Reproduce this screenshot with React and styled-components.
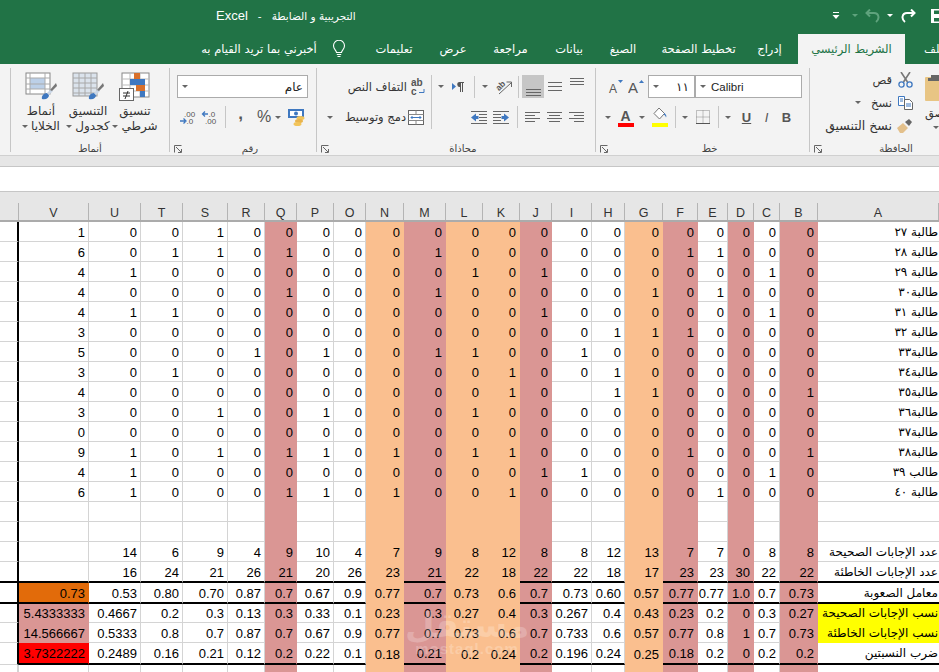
import React from "react";
import styled, { createGlobalStyle } from "styled-components";

const arabic = `"DejaVu Sans", sans-serif`;
const latin = `"Liberation Sans", "DejaVu Sans", sans-serif`;

const GlobalStyle = createGlobalStyle`
  html, body {
    margin: 0;
    padding: 0;
    background: #fff;
    overflow: hidden;
  }
`;

const Page = styled.div`
  width: 939px;
  height: 672px;
  overflow: hidden;
  display: flex;
  flex-direction: column;
  font-family: ${arabic};
`;

/* title bar + tabs */
const Header = styled.div`
  background: #217346;
  color: #fff;
  height: 64px;
  flex: none;
`;

const TitleRow = styled.div`
  height: 34px;
  display: flex;
  align-items: center;
  padding-left: 216px;
`;

const Title = styled.div`
  font-size: 10.5px;
  white-space: pre;
  margin-top: -4px;
  span { font-family: ${latin}; font-size: 13px; }
`;

const QuickBar = styled.div`
  margin-left: auto;
  margin-right: -21px;
  margin-top: -3px;
  height: 20px;
  display: flex;
  align-items: center;
`;

const TabRow = styled.div`
  height: 30px;
  display: flex;
  padding-left: 196px;
  overflow: hidden;
`;

const Tab = styled.div`
  flex: 0 0 ${(p) => p.$w}px;
  display: flex;
  align-items: center;
  justify-content: center;
  font-size: 11.5px;
  white-space: nowrap;
  background: ${(p) => (p.$active ? "#f3f3f3" : "transparent")};
  color: ${(p) => (p.$active ? "#217346" : "#fff")};
`;

/* ribbon */
const Ribbon = styled.div`
  height: 91px;
  flex: none;
  box-sizing: border-box;
  padding: 4px 0 3px 10px;
  background: #f3f3f3;
  display: flex;
  overflow: hidden;
  color: #333;
`;

const Group = styled.div`
  flex: 0 0 ${(p) => p.$w}px;
  box-sizing: border-box;
  border-left: 1px solid #c6c6c6;
  display: flex;
  flex-direction: column;
  padding-top: ${(p) => p.$top ?? 7}px;
`;

const GroupBody = styled.div`
  flex: 1;
  display: flex;
  padding-left: ${(p) => p.$pad ?? 0}px;
  min-height: 0;
`;

const Stack = styled.div`
  display: flex;
  flex-direction: column;
  gap: ${(p) => p.$gap ?? 7}px;
  flex: 0 0 ${(p) => (p.$w ? `${p.$w}px` : "auto")};
`;

const ToolRow = styled.div`
  display: flex;
  align-items: center;
  height: ${(p) => p.$h ?? 23}px;
  padding-left: ${(p) => p.$pad ?? 0}px;
`;

const Slot = styled.div`
  flex: 0 0 ${(p) => p.$w}px;
  height: 100%;
  display: flex;
  align-items: center;
  justify-content: ${(p) => (p.$end ? "flex-end" : "center")};
  background: ${(p) => (p.$on ? "#c6c6c6" : "transparent")};
  font-size: 11.5px;
  white-space: nowrap;
  color: #333;
`;

const Sep = styled.span`
  flex: none;
  width: 1px;
  height: ${(p) => p.$h ?? 22}px;
  background: #c6c6c6;
`;

const Caret = styled.i`
  display: inline-block;
  width: 0;
  height: 0;
  border-left: 3px solid transparent;
  border-right: 3px solid transparent;
  border-top: 3px solid ${(p) => p.$color ?? "#666"};
`;

const SelectBox = styled.div`
  box-sizing: border-box;
  flex: 0 0 ${(p) => p.$w}px;
  height: 23px;
  background: #fff;
  border: 1px solid #ababab;
  display: flex;
  align-items: center;
  gap: 5px;
  padding: 0 ${(p) => p.$right ?? 4}px 0 4px;
  color: #222;
`;

const BoxText = styled.span`
  font-family: ${(p) => (p.$latin ? latin : arabic)};
  font-size: ${(p) => (p.$latin ? "11.5px" : "12px")};
  margin-left: ${(p) => (p.$latin ? "0" : "auto")};
`;

const GroupLabel = styled.div`
  height: 14px;
  margin-bottom: -3px;
  display: flex;
  align-items: center;
  flex: none;
  font-size: 10px;
  color: #444;
  span.t {
    flex: 1;
    text-align: center;
    white-space: nowrap;
  }
`;

const Launcher = styled.svg`
  flex: none;
  width: 8px;
  height: 8px;
  margin: 2px 2px 0 4px;
`;

const BigButton = styled.div`
  flex: 0 0 ${(p) => p.$w}px;
  display: flex;
  flex-direction: column;
  align-items: center;
`;

const BigLabel = styled.div`
  margin-top: 3px;
  font-size: 12px;
  line-height: 14.5px;
  text-align: center;
  white-space: nowrap;
  color: #333;
  i { margin-right: 3px; vertical-align: middle; }
`;

const SmallTool = styled.div`
  height: 23px;
  display: flex;
  align-items: center;
  justify-content: flex-end;
  font-size: ${(p) => p.$size ?? 11.5}px;
  white-space: nowrap;
  i { margin-right: 10px; }
  div { margin-left: 2px; }
`;

const PasteCol = styled.div`
  flex: none;
  display: flex;
  flex-direction: column;
  align-items: flex-start;
  padding: 7px 0 0 9px;
  font-size: 11.5px;
  color: #333;
  span { margin-top: 5px; line-height: 14px; white-space: nowrap; }
  i { margin: 6px 0 0 8px; }
`;

const Percent = styled.span`
  font-family: ${latin};
  font-size: 16px;
  color: #555;
`;

const Comma = styled.span`
  font-family: ${latin};
  font-size: 17px;
  font-weight: 700;
  color: #555;
  margin-top: -7px;
`;

const FontGlyph = styled.span`
  font-family: ${latin};
  font-size: 13px;
  font-weight: ${(p) => (p.$bold ? 700 : 400)};
  font-style: ${(p) => (p.$italic ? "italic" : "normal")};
  text-decoration: ${(p) => (p.$under ? "underline" : "none")};
  color: #555;
`;

/* bands between ribbon and sheet */
const Band = styled.div`
  height: 12px;
  flex: none;
  box-sizing: border-box;
  background: #e6e6e6;
  border-top: 1px solid #d0d0d0;
  border-bottom: 1px solid #c6c6c6;
`;

const FormulaBar = styled.div`
  height: 24px;
  flex: none;
  background: #fff;
`;

/* sheet */
const Sheet = styled.div`
  position: relative;
  flex: 1;
  overflow: hidden;
  font-family: ${latin};
  font-size: 13px;
  color: #000;
`;

const HeaderRow = styled.div`
  display: grid;
  grid-template-columns: ${(p) => p.$cols};
  height: 31px;
  box-sizing: border-box;
  padding-top: 11px;
  background: #e6e6e6;
  border-top: 1px solid #c6c6c6;
  border-bottom: 2px solid #ababab;
`;

const ColName = styled.div`
  display: flex;
  align-items: center;
  justify-content: center;
  padding-top: 2px;
  font-size: 12.5px;
  color: #333;
  border-right: 1px solid #b4b4b4;
`;

const Row = styled.div`
  display: grid;
  grid-template-columns: ${(p) => p.$cols};
  height: ${(p) => p.$h}px;
`;

const Cell = styled.div`
  box-sizing: border-box;
  display: flex;
  align-items: center;
  justify-content: flex-end;
  padding: 1px 3px 0 0;
  white-space: nowrap;
  background: ${(p) => p.$fill ?? "#fff"};
  border-right: 1px solid ${(p) => (p.$fill ? "transparent" : "#d4d4d4")};
  border-bottom: ${(p) =>
    p.$thick ? "2px solid #000" : `1px solid ${p.$fill ? "transparent" : "#d4d4d4"}`};
`;

const Gutter = styled(Cell)`
  padding: 0;
  border-right: 2px solid ${(p) => (p.$open ? "#d4d4d4" : "#000")};
`;

const NameCell = styled(Cell)`
  direction: rtl;
  justify-content: flex-start;
  padding: 0 1px 0 0;
  font-family: ${arabic};
  font-size: 12px;
  overflow: hidden;
  border-right: none;
`;

const Watermark = styled.div`
  position: absolute;
  left: 405px;
  bottom: 16px;
  width: 124px;
  text-align: center;
  color: rgba(255, 255, 255, 0.22);
  pointer-events: none;
  b {
    display: block;
    font-family: ${arabic};
    font-size: 34px;
    line-height: 34px;
  }
  span {
    display: block;
    font-family: ${latin};
    font-size: 15px;
    font-weight: 700;
    line-height: 14px;
    letter-spacing: 1px;
  }
`;

const PINK = "#da9694";
const ORANGE = "#fabf8f";

const cols = [
  { n: "V", w: 70 },
  { n: "U", w: 52 },
  { n: "T", w: 42 },
  { n: "S", w: 45 },
  { n: "R", w: 37 },
  { n: "Q", w: 32, fill: PINK },
  { n: "P", w: 37 },
  { n: "O", w: 32 },
  { n: "N", w: 38, fill: ORANGE },
  { n: "M", w: 42, fill: PINK },
  { n: "L", w: 37, fill: ORANGE },
  { n: "K", w: 37, fill: ORANGE },
  { n: "J", w: 32, fill: PINK },
  { n: "I", w: 40 },
  { n: "H", w: 33 },
  { n: "G", w: 38, fill: ORANGE },
  { n: "F", w: 35, fill: PINK },
  { n: "E", w: 30 },
  { n: "D", w: 26, fill: PINK },
  { n: "C", w: 26 },
  { n: "B", w: 38, fill: PINK },
];

const template = `19px ${cols.map((c) => `${c.w}px`).join(" ")} 121px`;

const students = [
  ["طالبة ٢٧", "1 0 0 1 0 0 0 0 0 0 0 0 0 0 0 0 0 0 0 0 0"],
  ["طالبة ٢٨", "6 0 1 1 0 1 0 0 0 1 0 0 0 0 0 0 1 1 0 0 0"],
  ["طالبة ٢٩", "4 1 0 0 0 0 0 0 0 0 1 0 1 0 0 0 0 0 0 1 0"],
  ["طالبة٣٠", "4 0 0 0 0 1 0 0 0 1 0 0 0 0 0 1 0 1 0 0 0"],
  ["طالبة ٣١", "4 1 1 0 0 0 0 0 0 0 0 0 1 0 0 0 0 0 0 1 0"],
  ["طالبة ٣٢", "3 0 0 0 0 0 0 0 0 0 0 0 0 0 1 1 1 0 0 0 0"],
  ["طالبة٣٣", "5 0 0 0 1 0 1 0 0 1 1 0 0 1 0 0 0 0 0 0 0"],
  ["طالبة٣٤", "3 0 1 0 0 0 0 0 0 0 0 1 0 0 1 0 0 0 0 0 0"],
  ["طالبة٣٥", "4 0 0 0 0 0 0 0 0 0 0 1 0 - 1 1 0 0 0 0 1"],
  ["طالبة٣٦", "3 0 0 1 0 0 1 0 0 0 1 0 0 0 0 0 0 0 0 0 0"],
  ["طالبة٣٧", "0 0 0 0 0 0 0 0 0 0 0 0 0 0 0 0 0 0 0 0 0"],
  ["طالبة٣٨", "9 1 0 1 0 1 1 0 1 0 1 1 0 0 0 0 1 0 0 0 1"],
  ["طالب ٣٩", "4 1 0 0 0 0 0 0 0 0 0 0 1 1 0 0 0 0 0 1 0"],
  ["طالبة ٤٠", "6 1 0 0 0 1 1 0 1 0 0 1 0 0 0 0 0 1 0 0 0"],
];

const rows = [
  ...students.map(([name, v]) => ({ name, values: v, h: 20 })),
  { name: "", values: "", h: 20 },
  { name: "", values: "", h: 20 },
  {
    name: "عدد الإجابات الصحيحة",
    values: "- 14 6 9 4 9 10 4 7 9 8 12 8 8 12 13 7 7 0 8 8",
    h: 20,
  },
  {
    name: "عدد الإجابات الخاطئة",
    values: "- 16 24 21 26 21 20 26 23 21 22 18 22 22 18 17 23 23 30 22 22",
    h: 21,
    thick: true,
    gutterThick: true,
  },
  {
    name: "معامل الصعوبة",
    values: "0.73 0.53 0.80 0.70 0.87 0.7 0.67 0.9 0.77 0.7 0.73 0.6 0.7 0.73 0.60 0.57 0.77 0.77 1.0 0.7 0.73",
    h: 21,
    thick: true,
    gutterThick: true,
    vFill: "#e26b0a",
  },
  {
    name: "نسب الإجابات الصحيحة",
    values: "5.4333333 0.4667 0.2 0.3 0.13 0.3 0.33 0.1 0.23 0.3 0.27 0.4 0.3 0.267 0.4 0.43 0.23 0.2 0 0.3 0.27",
    h: 19,
    vFill: PINK,
    nameFill: "#ffff00",
  },
  {
    name: "نسب الإجابات الخاطئة",
    values: "14.566667 0.5333 0.8 0.7 0.87 0.7 0.67 0.9 0.77 0.7 0.73 0.6 0.7 0.733 0.6 0.57 0.77 0.8 1 0.7 0.73",
    h: 20,
    vFill: PINK,
    nameFill: "#ffff00",
  },
  {
    name: "ضرب النسبتين",
    values: "3.7322222 0.2489 0.16 0.21 0.12 0.2 0.22 0.1 0.18 0.21 0.2 0.24 0.2 0.196 0.24 0.25 0.18 0.2 0 0.2 0.2",
    h: 22,
    thick: true,
    vFill: "#ff0000",
  },
  { name: "", values: "", h: 8, open: true },
];

/* icons */
const Lines = ({ rows: list, w = 16, h = 14 }) => (
  <svg width={w} height={h} viewBox={`0 0 ${w} ${h}`}>
    {list.map(([a, b, y], i) => (
      <rect key={i} x={a} y={y} width={b - a} height="1" fill="#666" />
    ))}
  </svg>
);

const Bulb = () => (
  <svg width="14" height="18" viewBox="0 0 14 18" fill="none" stroke="#fff" strokeWidth="1.1">
    <path d="M4.5 12.5c0-2-3-3.2-3-6.7a5.5 5.5 0 0 1 11 0c0 3.5-3 4.7-3 6.7z" />
    <path d="M4.8 14.5h4.4M5.5 16.5h3" />
  </svg>
);

const SaveIcon = () => (
  <svg width="16" height="16" viewBox="0 0 16 16">
    <path fillRule="evenodd" fill="#fff" d="M1 1h12l2 2v12H1zM4 2.5V6h7V2.5zM4 10v3.5h8V10z" />
  </svg>
);

const RedoIcon = ({ flip, color = "#fff" }) => (
  <svg
    width="15"
    height="14"
    viewBox="0 0 15 14"
    fill="none"
    stroke={color}
    strokeWidth="2"
    style={{ transform: flip ? "scaleX(-1)" : "none" }}
  >
    <path d="M4 13C0 10 1 4 6 4H14" />
    <path d="M10 0.5L13.5 4 10 7.5" />
  </svg>
);

const CustomizeIcon = () => (
  <svg width="8" height="9" viewBox="0 0 8 9">
    <rect x="1" y="1" width="6" height="1" fill="#fff" />
    <path d="M0.5 4h7L4 8z" fill="#fff" />
  </svg>
);

const LauncherIcon = () => (
  <Launcher viewBox="0 0 8 8" fill="none" stroke="#666">
    <path d="M0.5 7.5v-7h7M2 2l5 5M7.5 4v3.5H4" />
  </Launcher>
);

const WrapIcon = () => (
  <svg width="16" height="18" viewBox="0 0 16 18">
    <text x="1" y="8" fontFamily="Liberation Sans" fontSize="10" fontWeight="700" fill="#555">ab</text>
    <text x="1" y="17" fontFamily="Liberation Sans" fontSize="10" fontWeight="700" fill="#555">c</text>
    <path d="M14 11v3.5H9" fill="none" stroke="#3f78c0" />
  </svg>
);

const MergeIcon = () => (
  <svg width="16" height="15" viewBox="0 0 16 15" fill="none">
    <rect x="0.5" y="0.5" width="15" height="14" fill="#fff" stroke="#666" />
    <path d="M0.5 4.5h15M0.5 10.5h15M8 .5v4M8 10.5v4" stroke="#888" />
    <path d="M3 7.5h10M4.5 6l-1.5 1.5L4.5 9M11.5 6L13 7.5 11.5 9" stroke="#3f78c0" />
  </svg>
);

const ParaIcon = () => (
  <svg width="14" height="12" viewBox="0 0 14 12">
    <path d="M1 2l4 3.5L1 9z" fill="#3f78c0" />
    <path d="M7.5 1h5.5v1h-1v9h-1V2h-1v9h-1V6a2.5 2.5 0 0 1-.5-5z" fill="#555" />
  </svg>
);

const OrientIcon = () => (
  <svg width="17" height="17" viewBox="0 0 17 17" fill="none" overflow="visible">
    <text x="0" y="10" fontFamily="Liberation Sans" fontSize="8.5" fontWeight="700" fill="#555" transform="rotate(-45 6 7)">ab</text>
    <path d="M4 16L16 5M11.5 4H16.5V9" stroke="#666" />
  </svg>
);

const IndentIcon = ({ flip }) => (
  <svg width="16" height="13" viewBox="0 0 16 13" style={{ transform: flip ? "scaleX(-1)" : "none" }}>
    <path d="M0 6.5L5 2.5V5H7.5V8H5V10.5z" fill="#3f78c0" />
    {[0, 3, 6, 9, 12].map((y) => (
      <rect key={y} x={y === 0 || y === 12 ? 0 : 8} y={y} width={y === 0 || y === 12 ? 16 : 8} height="1" fill="#666" />
    ))}
  </svg>
);

const CurrencyIcon = () => (
  <svg width="18" height="17" viewBox="0 0 18 17">
    <rect x="0" y="0" width="16" height="9" fill="#3f78c0" />
    <rect x="2" y="2" width="12" height="5" fill="#fff" />
    <circle cx="8" cy="4.5" r="2" fill="#3f78c0" />
    <ellipse cx="12.5" cy="9" rx="4" ry="2" fill="#f2c45a" />
    <ellipse cx="11" cy="12" rx="4" ry="2" fill="#e9b44c" />
    <ellipse cx="9.5" cy="15" rx="4" ry="2" fill="#f2c45a" />
  </svg>
);

const DecimalIcon = ({ more }) => (
  <svg width="16" height="15" viewBox="0 0 16 15" fontFamily="Liberation Sans" fontSize="8" fill="#555">
    {more ? (
      <>
        <text x="4" y="6.5">.00</text>
        <text x="6.5" y="14">.0</text>
        <path d="M0 11h5M3.5 8.5L6 11l-2.5 2.5" fill="none" stroke="#3f78c0" strokeWidth="1.3" />
      </>
    ) : (
      <>
        <text x="7.5" y="6.5">.0</text>
        <text x="4" y="14">.00</text>
        <path d="M1.5 4H7M4 1.5L1.5 4 4 6.5" fill="none" stroke="#3f78c0" strokeWidth="1.3" />
      </>
    )}
  </svg>
);

const SizeUp = ({ small }) => (
  <svg width="20" height="20" viewBox="0 0 20 20">
    <text x={small ? 1 : 0} y="16" fontFamily="Liberation Sans" fontSize={small ? 12 : 15} fill="#555">A</text>
    <path d={small ? "M10 3h5l-2.5 3z" : "M11 6h5l-2.5-3z"} fill="#3f78c0" />
  </svg>
);

const ColorA = () => (
  <svg width="16" height="19" viewBox="0 0 16 19">
    <text x="2.5" y="13" fontFamily="Liberation Sans" fontSize="14" fontWeight="700" fill="#555">A</text>
    <rect x="0" y="15" width="16" height="4" fill="#ff0000" />
  </svg>
);

const FillIcon = () => (
  <svg width="16" height="20" viewBox="0 0 16 20" fill="none">
    <path d="M7 1l5.5 5.5L7.5 12 2 6.5z" fill="#fff" stroke="#777" />
    <path d="M12.5 6c1.5 1.5 2.5 3 1.5 4.5C13.5 9 13 8 11.5 7.5z" fill="#3f78c0" />
    <rect x="0" y="16" width="16" height="4" fill="#ffff00" />
  </svg>
);

const BorderIcon = () => (
  <svg width="14" height="14" viewBox="0 0 14 14" fill="none" stroke="#888" strokeDasharray="1 1">
    <rect x="0.5" y="0.5" width="13" height="13" />
    <path d="M7 .5v13M.5 7h13" />
    <path d="M0 13.5h14" stroke="#555" strokeDasharray="none" />
  </svg>
);

const Scissors = () => (
  <svg width="15" height="16" viewBox="0 0 15 16" fill="none">
    <path d="M3 0l6.5 10M12 0L5.5 10" stroke="#777" strokeWidth="1.6" />
    <circle cx="3.5" cy="12.5" r="2.6" stroke="#3f78c0" strokeWidth="1.3" />
    <circle cx="11.5" cy="12.5" r="2.6" stroke="#3f78c0" strokeWidth="1.3" />
  </svg>
);

const CopyIcon = () => (
  <svg width="15" height="14" viewBox="0 0 15 14" fill="none" stroke="#3f78c0">
    <path d="M.5.5h6v9h-6z" fill="#fff" />
    <path d="M6.5 3.5h5l3 3v7h-8z" fill="#fff" stroke="#666" />
    <path d="M8 8h5M8 10h5M2 3h3M2 5h3" />
  </svg>
);

const PainterIcon = () => (
  <svg width="16" height="14" viewBox="0 0 16 14">
    <path d="M0 9l6-5 5 5-5 5H3z" fill="#e3c08b" />
    <path d="M8 3l4-3 3 3-3 4z" fill="#666" />
  </svg>
);

const PasteIcon = () => (
  <svg width="24" height="26" viewBox="0 0 24 26">
    <rect x="0" y="2" width="24" height="24" rx="1" fill="#e8c584" />
    <rect x="6" y="0" width="12" height="4" fill="#666" />
    <rect x="3" y="3" width="18" height="3" fill="#666" />
  </svg>
);

const Brush = () => (
  <g>
    <path d="M17 27c-1-3 2-6 5-6l2 2c0 3-3 5-7 4z" fill="#3f78c0" />
    <path d="M22 21l4-4 2 2-4 4z" fill="#c9d6e6" />
    <path d="M25 18l6-7 1 3-5 5z" fill="#777" />
  </g>
);

const CellStylesIcon = () => (
  <svg width="32" height="29" viewBox="0 0 32 29" fill="none">
    <rect x="1" y="1" width="24" height="21" fill="#fff" stroke="#888" />
    <rect x="5" y="6" width="15" height="11" fill="#bcd0e8" />
    <path d="M1 6h24M1 12h24M1 17h24M5 1v21M20 1v21" stroke="#aaa" />
    <Brush />
  </svg>
);

const TableIcon = () => (
  <svg width="32" height="29" viewBox="0 0 32 29" fill="none">
    <rect x="1" y="1" width="24" height="23" fill="#dbe3ec" stroke="#999" />
    <path d="M1 6h24M1 11h24M1 16h24M1 21h24M7 1v23M13 1v23M19 1v23" stroke="#a8a8a8" />
    <Brush />
  </svg>
);

const CondIcon = () => (
  <svg width="32" height="29" viewBox="0 0 32 29" fill="none">
    <rect x="3" y="1" width="27" height="24" fill="#fff" stroke="#888" />
    <path d="M3 7h27M3 13h27M3 19h27M11 1v24M21 1v24" stroke="#bbb" />
    <rect x="15" y="1" width="6" height="6" fill="#d8702b" />
    <rect x="11" y="7" width="15" height="6" fill="#3f78c0" />
    <rect x="17" y="13" width="9" height="6" fill="#d8702b" />
    <rect x="21" y="19" width="5" height="6" fill="#3f78c0" />
    <rect x="0.5" y="16.5" width="14" height="12" fill="#fff" stroke="#666" />
    <path d="M4 21h7M4 24h7M9 19l-3 8" stroke="#333" />
  </svg>
);

function GroupName({ text, launcher }) {
  return (
    <GroupLabel>
      {launcher && <LauncherIcon />}
      <span className="t">{text}</span>
    </GroupLabel>
  );
}

function StylesGroup() {
  return (
    <Group $w={159} $top={4}>
      <GroupBody $pad={6}>
        <BigButton $w={48}>
          <CellStylesIcon />
          <BigLabel>أنماط<br /><Caret />الخلايا</BigLabel>
        </BigButton>
        <BigButton $w={46}>
          <TableIcon />
          <BigLabel>التنسيق<br /><Caret />كجدول</BigLabel>
        </BigButton>
        <BigButton $w={48}>
          <CondIcon />
          <BigLabel>تنسيق<br /><Caret />شرطي</BigLabel>
        </BigButton>
      </GroupBody>
      <GroupName text="أنماط" />
    </Group>
  );
}

function NumberGroup() {
  return (
    <Group $w={147}>
      <GroupBody>
        <Stack>
          <ToolRow $pad={7}>
            <SelectBox $w={131}>
              <Caret />
              <BoxText>عام</BoxText>
            </SelectBox>
          </ToolRow>
          <ToolRow $pad={7} $h={24}>
            <Slot $w={21}><DecimalIcon more /></Slot>
            <Slot $w={22}><DecimalIcon /></Slot>
            <Slot $w={5} />
            <Sep />
            <Slot $w={29}><Comma>,</Comma></Slot>
            <Slot $w={18}><Percent>%</Percent></Slot>
            <Slot $w={10}><Caret /></Slot>
            <Slot $w={28}><CurrencyIcon /></Slot>
          </ToolRow>
        </Stack>
      </GroupBody>
      <GroupName text="رقم" launcher />
    </Group>
  );
}

function AlignGroup() {
  return (
    <Group $w={279}>
      <GroupBody>
        <Stack $w={114}>
          <ToolRow>
            <Slot $w={90} $end>التفاف النص</Slot>
            <Slot $w={21}><WrapIcon /></Slot>
          </ToolRow>
          <ToolRow $h={24}>
            <Slot $w={25}><Caret /></Slot>
            <Slot $w={64} $end>دمج وتوسيط</Slot>
            <Slot $w={19}><MergeIcon /></Slot>
          </ToolRow>
        </Stack>
        <Sep $h={54} />
        <Stack>
          <ToolRow>
            <Slot $w={18}><Caret /></Slot>
            <Slot $w={16}><ParaIcon /></Slot>
            <Slot $w={8} />
            <Sep />
            <Slot $w={20}><Caret /></Slot>
            <Slot $w={16}><OrientIcon /></Slot>
            <Slot $w={6} />
            <Sep />
            <Slot $w={3} />
            <Slot $w={22} $on>
              <Lines w={15} h={23} rows={[[0, 15, 14], [0, 15, 17], [0, 15, 20]]} />
            </Slot>
            <Slot $w={22}>
              <Lines w={14} h={11} rows={[[0, 14, 1], [0, 14, 5], [0, 14, 9]]} />
            </Slot>
            <Slot $w={22}>
              <Lines w={14} h={23} rows={[[0, 14, 3], [0, 14, 6], [0, 14, 9]]} />
            </Slot>
          </ToolRow>
          <ToolRow $h={24}>
            <Slot $w={36} />
            <Slot $w={22}><IndentIcon /></Slot>
            <Slot $w={22}><IndentIcon flip /></Slot>
            <Slot $w={5} />
            <Sep />
            <Slot $w={3} />
            <Slot $w={22}>
              <Lines w={15} h={11} rows={[[0, 15, 0], [0, 10, 3], [0, 15, 6], [0, 10, 9]]} />
            </Slot>
            <Slot $w={22}>
              <Lines w={15} h={11} rows={[[0, 15, 0], [2, 13, 3], [0, 15, 6], [2, 13, 9]]} />
            </Slot>
            <Slot $w={22}>
              <Lines w={15} h={11} rows={[[0, 15, 0], [5, 15, 3], [0, 15, 6], [5, 15, 9]]} />
            </Slot>
          </ToolRow>
        </Stack>
      </GroupBody>
      <GroupName text="محاذاة" launcher />
    </Group>
  );
}

function FontGroup() {
  return (
    <Group $w={214}>
      <GroupBody>
        <Stack>
          <ToolRow $pad={11}>
            <Slot $w={21}><SizeUp small /></Slot>
            <Slot $w={19}><SizeUp /></Slot>
            <SelectBox $w={47} $right={5}>
              <Caret />
              <BoxText>١١</BoxText>
            </SelectBox>
            <SelectBox $w={107}>
              <Caret />
              <BoxText $latin>Calibri</BoxText>
            </SelectBox>
          </ToolRow>
          <ToolRow $pad={7} $h={24}>
            <Slot $w={10}><Caret /></Slot>
            <Slot $w={26}><ColorA /></Slot>
            <Slot $w={6}><Caret /></Slot>
            <Slot $w={30}><FillIcon /></Slot>
            <Sep />
            <Slot $w={18}><Caret /></Slot>
            <Slot $w={18}><BorderIcon /></Slot>
            <Slot $w={6} />
            <Sep />
            <Slot $w={18}><Caret /></Slot>
            <Slot $w={19}><FontGlyph $bold $under>U</FontGlyph></Slot>
            <Slot $w={21}><FontGlyph $italic>I</FontGlyph></Slot>
            <Slot $w={19}><FontGlyph $bold>B</FontGlyph></Slot>
          </ToolRow>
        </Stack>
      </GroupBody>
      <GroupName text="خط" launcher />
    </Group>
  );
}

function ClipboardGroup() {
  return (
    <Group $w={159} $top={0}>
      <GroupBody>
        <Stack $w={106} $gap={0}>
          <SmallTool>قص<Slot $w={22}><Scissors /></Slot></SmallTool>
          <SmallTool><Caret />نسخ<Slot $w={22}><CopyIcon /></Slot></SmallTool>
          <SmallTool $size={12.5}>نسخ التنسيق<Slot $w={22}><PainterIcon /></Slot></SmallTool>
        </Stack>
        <PasteCol>
          <PasteIcon />
          <span>لصق</span>
          <Caret />
        </PasteCol>
      </GroupBody>
      <GroupName text="الحافظة" launcher />
    </Group>
  );
}

function SheetGrid() {
  return (
    <Sheet>
      <HeaderRow $cols={template}>
        <ColName />
        {cols.map((c) => (
          <ColName key={c.n}>{c.n}</ColName>
        ))}
        <ColName>A</ColName>
      </HeaderRow>
      {rows.map((r, i) => {
        const values = r.values ? r.values.split(" ") : [];
        return (
          <Row key={i} $cols={template} $h={r.h}>
            <Gutter $thick={r.gutterThick} $open={r.open} />
            {cols.map((c, j) => {
              const fill = j === 0 ? r.vFill : c.fill;
              const text = values[j] === "-" ? "" : values[j];
              return (
                <Cell key={c.n} $fill={fill} $thick={r.thick && c.fill !== ORANGE}>
                  {text}
                </Cell>
              );
            })}
            <NameCell $fill={r.nameFill} $thick={r.thick}>{r.name}</NameCell>
          </Row>
        );
      })}
      <Watermark>
        <b>مستقل</b>
        <span>mostaql.com</span>
      </Watermark>
    </Sheet>
  );
}

export default function App() {
  return (
    <Page>
      <GlobalStyle />
      <Header>
        <TitleRow>
          <Title><span>Excel</span>{"   -   "}التجريبية و الضابطة</Title>
          <QuickBar>
            <Slot $w={20}><CustomizeIcon /></Slot>
            <Slot $w={18}><Caret $color="#5fa37d" /></Slot>
            <Slot $w={16}><RedoIcon flip color="#5fa37d" /></Slot>
            <Slot $w={20}><Caret $color="#fff" /></Slot>
            <Slot $w={16}><RedoIcon /></Slot>
            <Slot $w={44}><SaveIcon /></Slot>
          </QuickBar>
        </TitleRow>
        <TabRow>
          <Tab $w={126}>أخبرني بما تريد القيام به</Tab>
          <Tab $w={33}><Bulb /></Tab>
          <Tab $w={78}>تعليمات</Tab>
          <Tab $w={40}>عرض</Tab>
          <Tab $w={75}>مراجعة</Tab>
          <Tab $w={42}>بيانات</Tab>
          <Tab $w={66}>الصيغ</Tab>
          <Tab $w={85}>تخطيط الصفحة</Tab>
          <Tab $w={57}>إدراج</Tab>
          <Tab $w={107} $active>الشريط الرئيسي</Tab>
          <Tab $w={60}>ملف</Tab>
        </TabRow>
      </Header>
      <Ribbon>
        <StylesGroup />
        <NumberGroup />
        <AlignGroup />
        <FontGroup />
        <ClipboardGroup />
      </Ribbon>
      <Band />
      <FormulaBar />
      <SheetGrid />
    </Page>
  );
}
